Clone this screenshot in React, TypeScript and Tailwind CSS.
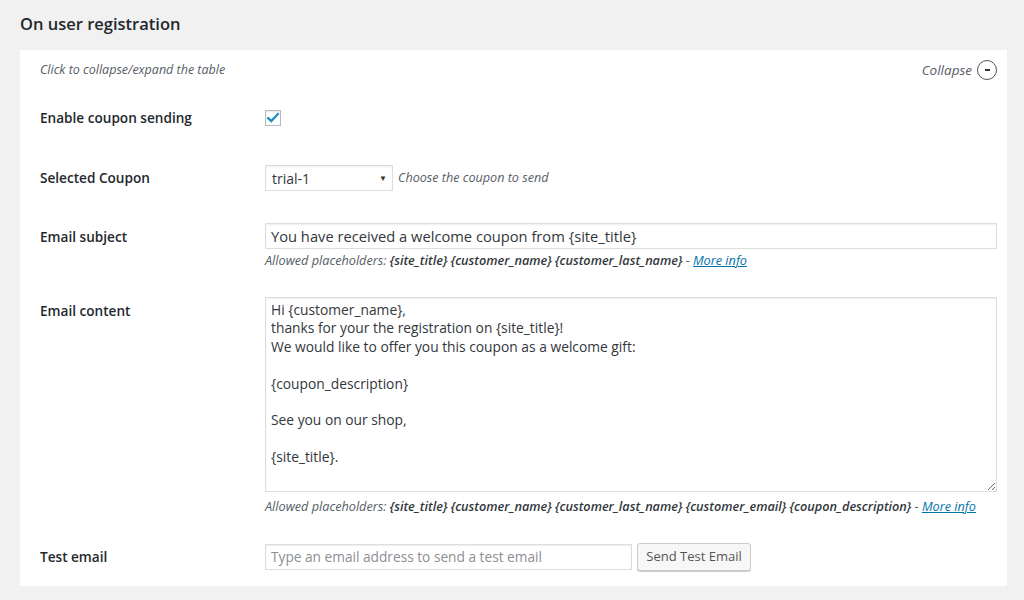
import React from "react";

const font = { fontFamily: '"Open Sans", "Liberation Sans", sans-serif' };

const EMAIL_BODY = `Hi {customer_name},
thanks for your the registration on {site_title}!
We would like to offer you this coupon as a welcome gift:

{coupon_description}

See you on our shop,

{site_title}.`;

function Placeholders({ items }: { items: string[] }) {
  return (
    <p className="text-[12.7px] leading-[16px] italic text-[#555d66]">
      Allowed placeholders:{" "}
      {items.map((p) => (
        <span key={p}>
          <b className="font-semibold text-[#32373c]">{p}</b>{" "}
        </span>
      ))}
      -{" "}
      <a href="#" className="text-[#0073aa] underline">
        More info
      </a>
    </p>
  );
}

function Label({ children, className = "" }: { children: React.ReactNode; className?: string }) {
  return (
    <div className={"w-[225px] shrink-0 text-[13.6px] font-semibold text-[#23282d] " + className}>
      {children}
    </div>
  );
}

export default function App() {
  return (
    <div className="w-[1024px] h-[600px] bg-[#f1f1f1] px-[20px] overflow-hidden" style={font}>
      <h2 className="h-[50px] flex items-center text-[16.5px] font-semibold text-[#23282d] pb-[2px]">
        On user registration
      </h2>

      <div className="w-[987px] bg-white pl-[20px] pr-[10px] pt-[10px] pb-[15px]">
        <div className="h-[20px] flex items-center justify-between">
          <span className="text-[12.5px] italic text-[#555d66]">Click to collapse/expand the table</span>
          <span className="flex items-center gap-[5px] text-[13.5px] italic text-[#555d66]">
            Collapse
            <span className="w-[20px] h-[20px] rounded-full border border-[#555] flex items-center justify-center">
              <span className="w-[5px] h-[1.5px] bg-[#333]" />
            </span>
          </span>
        </div>

        {/* enable */}
        <div className="mt-[28px] h-[20px] flex items-center">
          <Label>Enable coupon sending</Label>
          <span className="w-[16px] h-[16px] border border-[#b4b9be] bg-white shadow-[inset_0_1px_2px_rgba(0,0,0,0.1)] flex items-center justify-center">
            <svg viewBox="0 0 16 16" className="w-[14px] h-[14px]">
              <path d="M2.5 8.2 L6 11.5 L13.5 3.5" fill="none" stroke="#1e8cbe" strokeWidth="2.6" strokeLinecap="square" />
            </svg>
          </span>
        </div>

        {/* coupon */}
        <div className="mt-[37px] h-[26px] flex items-center">
          <Label>Selected Coupon</Label>
          <div className="w-[128px] h-[26px] border border-[#ddd] shadow-[inset_0_1px_2px_rgba(0,0,0,0.07)] flex items-center justify-between pl-[6px] pr-[5px] text-[14px] text-[#32373c]">
            <span>trial-1</span>
            <span className="text-[8px] text-[#333]">▼</span>
          </div>
          <span className="ml-[5px] text-[12.6px] italic text-[#555d66]">Choose the coupon to send</span>
        </div>

        {/* subject */}
        <div className="mt-[32px] flex">
          <Label className="leading-[28px]">Email subject</Label>
          <div className="w-[733px]">
            <div className="h-[26px] border border-[#ddd] shadow-[inset_0_1px_2px_rgba(0,0,0,0.07)] flex items-center px-[5px] text-[14.7px] text-[#32373c]">
              You have received a welcome coupon from {"{site_title}"}
            </div>
            <div className="mt-[3px]">
              <Placeholders items={["{site_title}", "{customer_name}", "{customer_last_name}"]} />
            </div>
          </div>
        </div>

        {/* content */}
        <div className="mt-[29px] flex">
          <Label className="mt-[4px] leading-[20px]">Email content</Label>
          <div className="w-[733px]">
            <textarea
              readOnly
              defaultValue={EMAIL_BODY}
              className="block w-full h-[195px] border border-[#ddd] shadow-[inset_0_1px_2px_rgba(0,0,0,0.07)] px-[5px] pt-[3px] text-[13.8px] leading-[18.4px] text-[#32373c] outline-none"
              style={font}
            />
            <div className="mt-[6px]">
              <Placeholders
                items={["{site_title}", "{customer_name}", "{customer_last_name}", "{customer_email}", "{coupon_description}"]}
              />
            </div>
          </div>
        </div>

        {/* test */}
        <div className="mt-[29px] h-[28px] flex items-center">
          <Label>Test email</Label>
          <div className="w-[367px] h-[26px] border border-[#ddd] shadow-[inset_0_1px_2px_rgba(0,0,0,0.07)] flex items-center px-[5px] text-[13.7px] text-[#8c8f94]">
            Type an email address to send a test email
          </div>
          <button className="ml-[5px] w-[114px] h-[28px] rounded-[3px] border border-[#ccc] bg-[#f7f7f7] shadow-[0_1px_0_#ccc] text-[13px] text-[#555]">
            Send Test Email
          </button>
        </div>
      </div>
    </div>
  );
}
